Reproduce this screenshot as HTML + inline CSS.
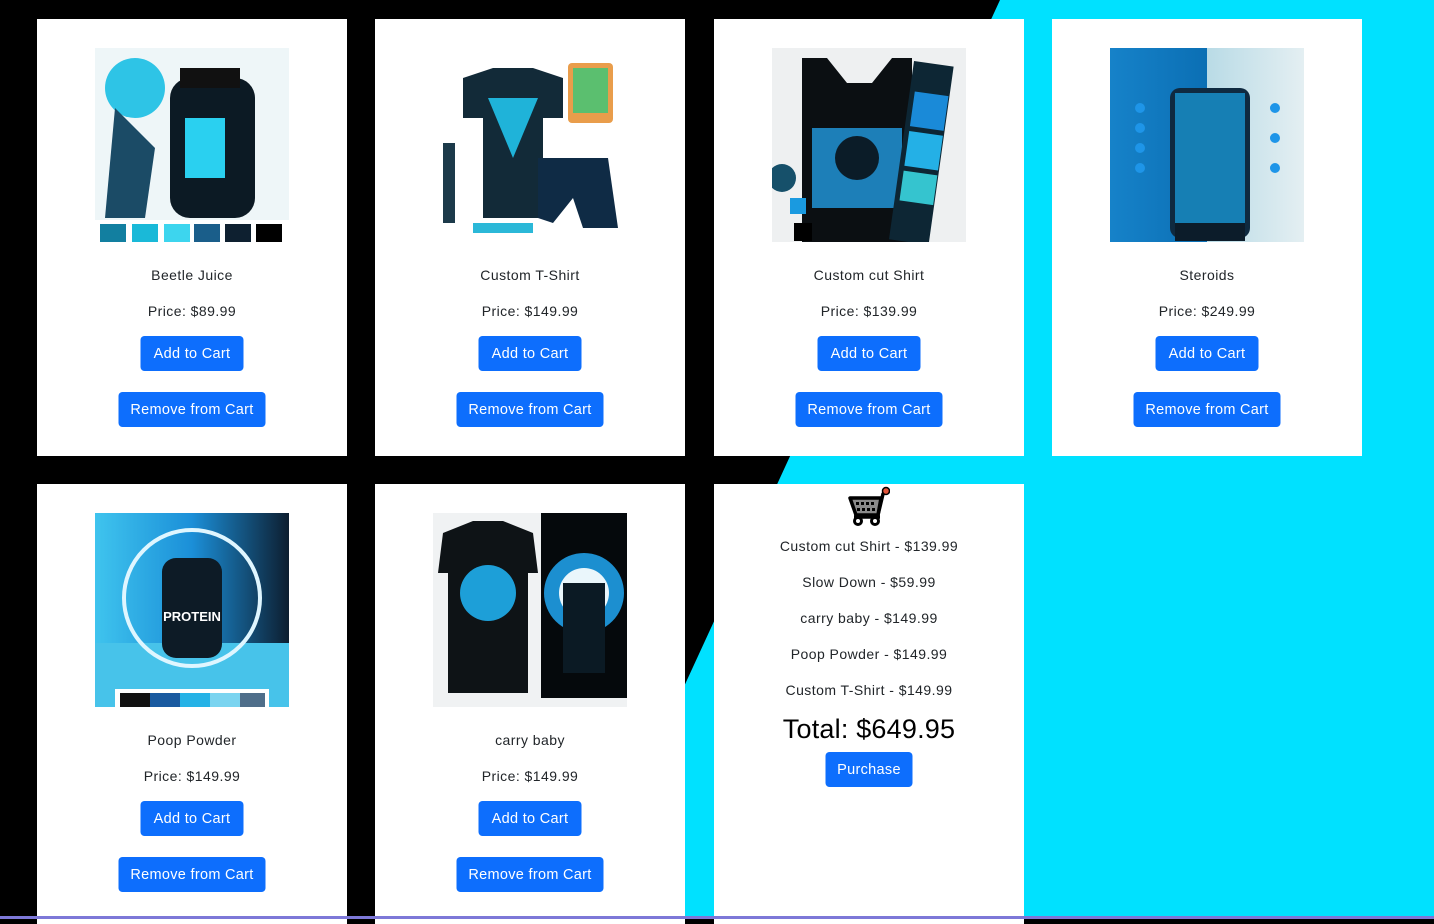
<!DOCTYPE html>
<html><head><meta charset="utf-8"><style>
*{box-sizing:border-box;margin:0;padding:0}
body{width:1434px;height:919px;overflow:hidden;position:relative;background:#000;font-family:"Liberation Sans",sans-serif;color:#212529}
.bg{position:absolute;inset:0}
.card{position:absolute;width:310px;background:#fff;text-align:center}
.img{position:absolute;left:58px;top:29px;width:194px;height:194px}
.t{position:absolute;left:0;width:100%;font-size:14px;letter-spacing:.45px}
.btn{position:absolute;left:50%;transform:translateX(-50%);height:35px;background:#0d6efd;color:#fff;border-radius:4px;font-size:14.5px;line-height:37px;white-space:nowrap;letter-spacing:.3px}
.bot{position:absolute;left:0;right:0;bottom:0;height:3px;background:#7d78d8}
</style></head><body>
<svg class="bg" width="1434" height="919"><polygon points="1000,0 1434,0 1434,919 577,919" fill="#00e1ff"/></svg>

<div class="card" style="left:37px;top:19px;height:437px">
<svg class="img" viewBox="0 0 194 194"><rect width="194" height="172" fill="#eef6f8"/><circle cx="40" cy="40" r="30" fill="#2ec4e6"/><rect x="75" y="30" width="85" height="140" rx="20" fill="#0c1a24"/><rect x="85" y="20" width="60" height="20" fill="#111"/><path d="M20 60 L60 100 L50 170 L10 170Z" fill="#1b4b66"/><rect x="90" y="70" width="40" height="60" fill="#2ad0f0"/><g><rect x="5" y="176" width="26" height="18" fill="#127fa0"/><rect x="37" y="176" width="26" height="18" fill="#1ab9d8"/><rect x="69" y="176" width="26" height="18" fill="#3dd5ee"/><rect x="99" y="176" width="26" height="18" fill="#1a5e8a"/><rect x="130" y="176" width="26" height="18" fill="#0e2030"/><rect x="161" y="176" width="26" height="18" fill="#000"/></g></svg>
<div class="t" style="top:248px">Beetle Juice</div><div class="t" style="top:284px">Price: $89.99</div>
<div class="btn" style="top:317px;width:103px">Add to Cart</div><div class="btn" style="top:373px;width:147px">Remove from Cart</div></div>

<div class="card" style="left:375px;top:19px;height:437px">
<svg class="img" viewBox="0 0 194 194"><rect width="194" height="194" fill="#fff"/><path d="M30 30 L60 20 L100 20 L130 30 L130 70 L110 70 L110 170 L50 170 L50 70 L30 70Z" fill="#122a38"/><path d="M55 50 L80 110 L105 50Z" fill="#1fb3d9"/><rect x="135" y="15" width="45" height="60" rx="4" fill="#e99d4b"/><rect x="140" y="20" width="35" height="45" fill="#5bbf6f"/><path d="M105 110 L175 110 L185 180 L150 180 L140 150 L120 175 L105 170Z" fill="#0f2b45"/><rect x="10" y="95" width="12" height="80" fill="#1c3a4a"/><rect x="40" y="175" width="60" height="10" fill="#2bb8d8"/></svg>
<div class="t" style="top:248px">Custom T-Shirt</div><div class="t" style="top:284px">Price: $149.99</div>
<div class="btn" style="top:317px;width:103px">Add to Cart</div><div class="btn" style="top:373px;width:147px">Remove from Cart</div></div>

<div class="card" style="left:714px;top:19px;height:437px">
<svg class="img" viewBox="0 0 194 194"><rect width="194" height="194" fill="#eef0f1"/><path d="M30 10 L55 10 L75 35 L100 35 L120 10 L140 10 L140 194 L30 194Z" fill="#0b0f12"/><rect x="40" y="80" width="90" height="80" fill="#1d7fb8"/><circle cx="85" cy="110" r="22" fill="#0b1c28"/><rect x="130" y="15" width="40" height="180" fill="#0d2634" transform="rotate(8 150 100)"/><rect x="135" y="45" width="34" height="35" fill="#1a8ad8" transform="rotate(8 150 100)"/><rect x="135" y="85" width="34" height="35" fill="#24b0e6" transform="rotate(8 150 100)"/><rect x="135" y="125" width="34" height="30" fill="#35c4cf" transform="rotate(8 150 100)"/><circle cx="10" cy="130" r="14" fill="#16506a"/><rect x="18" y="150" width="16" height="16" fill="#1a9ae0"/><rect x="22" y="175" width="18" height="18" fill="#000"/></svg>
<div class="t" style="top:248px">Custom cut Shirt</div><div class="t" style="top:284px">Price: $139.99</div>
<div class="btn" style="top:317px;width:103px">Add to Cart</div><div class="btn" style="top:373px;width:147px">Remove from Cart</div></div>

<div class="card" style="left:1052px;top:19px;height:437px">
<svg class="img" viewBox="0 0 194 194"><defs><linearGradient id="g1" x1="0" x2="1"><stop offset="0" stop-color="#1682c9"/><stop offset=".5" stop-color="#0b6fb4"/><stop offset=".5" stop-color="#b9dbe6"/><stop offset="1" stop-color="#e4eff2"/></linearGradient></defs><rect width="194" height="194" fill="url(#g1)"/><rect x="60" y="40" width="80" height="150" rx="10" fill="#0f2a40"/><rect x="65" y="45" width="70" height="130" fill="#1aa4e6" opacity=".7"/><rect x="65" y="175" width="70" height="18" fill="#0c1c2a"/><g fill="#1e95e8"><circle cx="30" cy="60" r="5"/><circle cx="30" cy="80" r="5"/><circle cx="30" cy="100" r="5"/><circle cx="30" cy="120" r="5"/><circle cx="165" cy="60" r="5"/><circle cx="165" cy="90" r="5"/><circle cx="165" cy="120" r="5"/></g></svg>
<div class="t" style="top:248px">Steroids</div><div class="t" style="top:284px">Price: $249.99</div>
<div class="btn" style="top:317px;width:103px">Add to Cart</div><div class="btn" style="top:373px;width:147px">Remove from Cart</div></div>

<div class="card" style="left:37px;top:484px;height:440px">
<svg class="img" viewBox="0 0 194 194"><defs><linearGradient id="g2" x1="0" x2="1"><stop offset="0" stop-color="#3fc4ee"/><stop offset=".5" stop-color="#1b8fd8"/><stop offset="1" stop-color="#0d1e30"/></linearGradient></defs><rect width="194" height="194" fill="url(#g2)"/><rect y="130" width="194" height="64" fill="#47c3ea"/><circle cx="97" cy="85" r="68" fill="none" stroke="#dff6ff" stroke-width="4"/><rect x="67" y="45" width="60" height="100" rx="14" fill="#0d1b26"/><text x="97" y="108" font-size="13" font-weight="bold" fill="#fff" text-anchor="middle" font-family="Liberation Sans">PROTEIN</text><rect x="20" y="176" width="154" height="18" fill="#fff"/><rect x="25" y="180" width="30" height="14" fill="#111"/><rect x="55" y="180" width="30" height="14" fill="#1a5aa0"/><rect x="85" y="180" width="30" height="14" fill="#25b2e6"/><rect x="115" y="180" width="30" height="14" fill="#7ad4f0"/><rect x="145" y="180" width="25" height="14" fill="#4f6e8a"/></svg>
<div class="t" style="top:248px">Poop Powder</div><div class="t" style="top:284px">Price: $149.99</div>
<div class="btn" style="top:317px;width:103px">Add to Cart</div><div class="btn" style="top:373px;width:147px">Remove from Cart</div></div>

<div class="card" style="left:375px;top:484px;height:440px">
<svg class="img" viewBox="0 0 194 194"><rect width="194" height="194" fill="#f0f2f3"/><path d="M10 20 L40 8 L70 8 L100 20 L105 60 L95 60 L95 180 L15 180 L15 60 L5 60Z" fill="#0e1316"/><circle cx="55" cy="80" r="28" fill="#1d9fd8"/><rect x="108" y="0" width="86" height="185" fill="#05090c"/><circle cx="151" cy="80" r="40" fill="#1c8fd0"/><circle cx="151" cy="80" r="25" fill="#eaf6fb"/><rect x="130" y="70" width="42" height="90" fill="#0b1a24"/></svg>
<div class="t" style="top:248px">carry baby</div><div class="t" style="top:284px">Price: $149.99</div>
<div class="btn" style="top:317px;width:103px">Add to Cart</div><div class="btn" style="top:373px;width:147px">Remove from Cart</div></div>

<div class="card" style="left:714px;top:484px;height:440px">
<svg style="position:absolute;left:134px;top:2px" width="42" height="40" viewBox="0 0 42 40"><path d="M2 12 L33 12 L30 29 L8 29Z" fill="#8a8a8a" stroke="#000" stroke-width="3.5" stroke-linejoin="round"/><path d="M30 29 L35 8 L38 6" fill="none" stroke="#000" stroke-width="3.5"/><circle cx="38" cy="5" r="3.5" fill="#e0543a" stroke="#000" stroke-width="1.5"/><g fill="#000"><rect x="8" y="16" width="3" height="3"/><rect x="13" y="16" width="3" height="3"/><rect x="18" y="16" width="3" height="3"/><rect x="23" y="16" width="3" height="3"/><rect x="9" y="22" width="3" height="3"/><rect x="14" y="22" width="3" height="3"/><rect x="19" y="22" width="3" height="3"/><rect x="24" y="22" width="3" height="3"/></g><path d="M6 31 L32 31" stroke="#000" stroke-width="3.5"/><circle cx="10" cy="35" r="3.5" fill="#fff" stroke="#000" stroke-width="3"/><circle cx="27" cy="35" r="3.5" fill="#fff" stroke="#000" stroke-width="3"/></svg>
<div class="t" style="top:54px">Custom cut Shirt - $139.99</div>
<div class="t" style="top:90px">Slow Down - $59.99</div>
<div class="t" style="top:126px">carry baby - $149.99</div>
<div class="t" style="top:162px">Poop Powder - $149.99</div>
<div class="t" style="top:198px">Custom T-Shirt - $149.99</div>
<div class="t" style="top:230px;font-size:27px;color:#000;letter-spacing:.2px">Total: $649.95</div>
<div class="btn" style="top:268px;width:87px">Purchase</div>
</div>
<div class="bot"></div>
</body></html>
